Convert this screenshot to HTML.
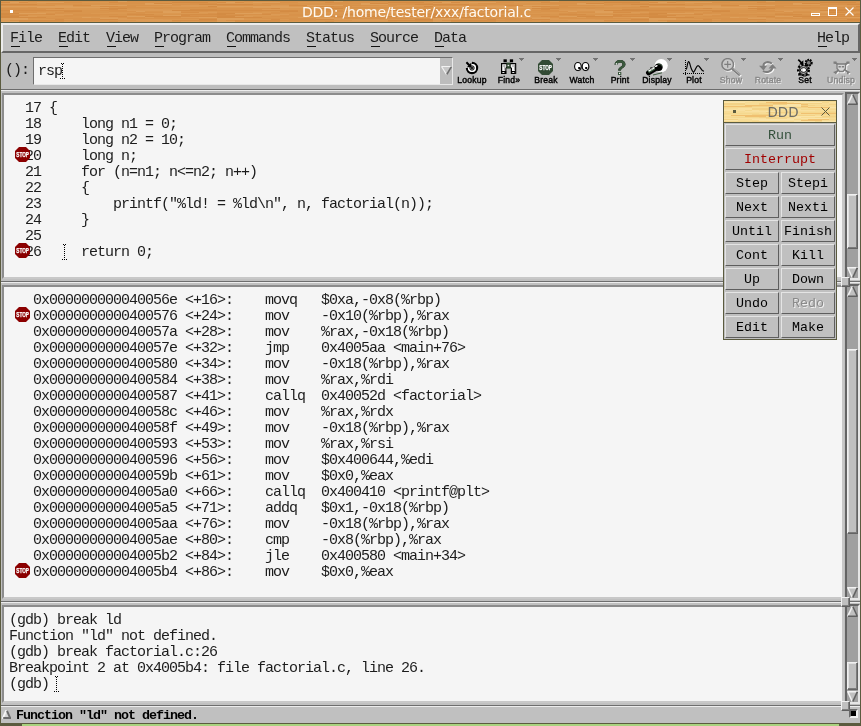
<!DOCTYPE html><html><head><meta charset="utf-8"><title>DDD: /home/tester/xxx/factorial.c</title><style>
html,body{margin:0;padding:0}
body{width:861px;height:726px;position:relative;overflow:hidden;background:#5b5b3f;font-family:"Liberation Mono",monospace;color:#000}
div,span,pre,svg{box-sizing:border-box}
.abs{position:absolute}
.mono,.menu,.lbl,.title,.btn span{will-change:transform}
.mono{font-family:"Liberation Mono",monospace;font-size:15px;letter-spacing:-1px;line-height:16px;white-space:pre;margin:0;position:absolute;color:#1c1c1c}
.menu{font-family:"Liberation Mono",monospace;font-size:15px;letter-spacing:-1px;line-height:16px;white-space:pre;position:absolute;color:#1c1c1c}
.menu i{position:absolute;left:1px;top:15px;width:9px;height:1px;background:#111}
.lbl{font-family:"Liberation Sans",sans-serif;font-size:8.6px;line-height:10px;position:absolute;text-align:center;white-space:pre;color:#000;width:60px;letter-spacing:0.2px;-webkit-text-stroke:0.4px #000}
.lbl.dis{color:#8a8a8a;text-shadow:1px 1px 0 #f4f4f4;-webkit-text-stroke:0.4px #8a8a8a}
.frame{position:absolute;border:2px solid;border-color:#8c8c8c #c8c8c8 #c8c8c8 #8c8c8c;background:#f5f5f5}
.btn{position:absolute;background:#c0c0c0;border:1px solid;border-color:#e4e4e4 #5e5e5e #5e5e5e #e4e4e4;text-align:center}
.btn span{font-family:"Liberation Mono",monospace;font-size:13.333px;line-height:20px;white-space:pre;display:block;position:relative;top:1px}
.title{position:absolute;font-family:"DejaVu Sans","Liberation Sans",sans-serif;white-space:pre}
</style></head><body>
<div style="position:absolute;left:22px;top:724px;width:817px;height:2px;background:#a9d27f;"></div>
<svg style="position:absolute;left:1px;top:1px" width="859" height="21" viewBox="0 0 859 21" shape-rendering="crispEdges"><defs><pattern id="w1" width="216" height="21" patternUnits="userSpaceOnUse"><rect width="216" height="21" fill="#d8924a"/><rect x="0" y="0" width="27" height="1" fill="#db9850"/><rect x="117" y="0" width="9" height="1" fill="#de9f5a"/><rect x="0" y="1" width="9" height="1" fill="#d58d45"/><rect x="9" y="1" width="9" height="1" fill="#de9f5a"/><rect x="18" y="1" width="9" height="1" fill="#d58d45"/><rect x="27" y="1" width="9" height="1" fill="#db9850"/><rect x="36" y="1" width="27" height="1" fill="#de9f5a"/><rect x="81" y="1" width="27" height="1" fill="#db9850"/><rect x="108" y="1" width="9" height="1" fill="#d58d45"/><rect x="153" y="1" width="18" height="1" fill="#d9954d"/><rect x="171" y="1" width="36" height="1" fill="#d38b43"/><rect x="207" y="1" width="9" height="1" fill="#d9954d"/><rect x="0" y="2" width="27" height="1" fill="#dc9a54"/><rect x="27" y="2" width="18" height="1" fill="#db9850"/><rect x="63" y="2" width="27" height="1" fill="#d9954d"/><rect x="90" y="2" width="27" height="1" fill="#d9954d"/><rect x="144" y="2" width="9" height="1" fill="#de9f5a"/><rect x="153" y="2" width="18" height="1" fill="#d38b43"/><rect x="171" y="2" width="18" height="1" fill="#d9954d"/><rect x="0" y="3" width="9" height="1" fill="#d38b43"/><rect x="9" y="3" width="27" height="1" fill="#d38b43"/><rect x="36" y="3" width="36" height="1" fill="#d9954d"/><rect x="81" y="3" width="27" height="1" fill="#d9954d"/><rect x="117" y="3" width="27" height="1" fill="#d9954d"/><rect x="144" y="3" width="27" height="1" fill="#de9f5a"/><rect x="198" y="3" width="18" height="1" fill="#d38b43"/><rect x="54" y="4" width="18" height="1" fill="#dc9a54"/><rect x="72" y="4" width="18" height="1" fill="#d58d45"/><rect x="90" y="4" width="36" height="1" fill="#de9f5a"/><rect x="162" y="4" width="18" height="1" fill="#d9954d"/><rect x="180" y="4" width="36" height="1" fill="#dc9a54"/><rect x="0" y="5" width="18" height="1" fill="#de9f5a"/><rect x="18" y="5" width="27" height="1" fill="#de9f5a"/><rect x="45" y="5" width="27" height="1" fill="#de9f5a"/><rect x="72" y="5" width="18" height="1" fill="#db9850"/><rect x="90" y="5" width="9" height="1" fill="#db9850"/><rect x="99" y="5" width="18" height="1" fill="#d58d45"/><rect x="135" y="5" width="36" height="1" fill="#db9850"/><rect x="171" y="5" width="27" height="1" fill="#dc9a54"/><rect x="198" y="5" width="9" height="1" fill="#db9850"/><rect x="207" y="5" width="9" height="1" fill="#d38b43"/><rect x="0" y="6" width="27" height="1" fill="#db9850"/><rect x="27" y="6" width="9" height="1" fill="#d9954d"/><rect x="36" y="6" width="36" height="1" fill="#de9f5a"/><rect x="72" y="6" width="36" height="1" fill="#de9f5a"/><rect x="108" y="6" width="9" height="1" fill="#d9954d"/><rect x="171" y="6" width="18" height="1" fill="#d9954d"/><rect x="54" y="7" width="9" height="1" fill="#d58d45"/><rect x="63" y="7" width="36" height="1" fill="#db9850"/><rect x="99" y="7" width="27" height="1" fill="#d38b43"/><rect x="126" y="7" width="27" height="1" fill="#d9954d"/><rect x="162" y="7" width="36" height="1" fill="#d9954d"/><rect x="198" y="7" width="18" height="1" fill="#d9954d"/><rect x="45" y="8" width="27" height="1" fill="#dc9a54"/><rect x="72" y="8" width="36" height="1" fill="#db9850"/><rect x="108" y="8" width="9" height="1" fill="#d58d45"/><rect x="117" y="8" width="27" height="1" fill="#db9850"/><rect x="144" y="8" width="9" height="1" fill="#dc9a54"/><rect x="153" y="8" width="9" height="1" fill="#dc9a54"/><rect x="162" y="8" width="27" height="1" fill="#db9850"/><rect x="189" y="8" width="27" height="1" fill="#d58d45"/><rect x="0" y="9" width="27" height="1" fill="#d58d45"/><rect x="27" y="9" width="18" height="1" fill="#d58d45"/><rect x="45" y="9" width="36" height="1" fill="#d58d45"/><rect x="81" y="9" width="18" height="1" fill="#d9954d"/><rect x="126" y="9" width="9" height="1" fill="#dc9a54"/><rect x="135" y="9" width="36" height="1" fill="#dc9a54"/><rect x="171" y="9" width="18" height="1" fill="#d38b43"/><rect x="189" y="9" width="27" height="1" fill="#d38b43"/><rect x="45" y="10" width="18" height="1" fill="#d9954d"/><rect x="63" y="10" width="18" height="1" fill="#d38b43"/><rect x="81" y="10" width="18" height="1" fill="#d9954d"/><rect x="99" y="10" width="9" height="1" fill="#d9954d"/><rect x="135" y="10" width="9" height="1" fill="#de9f5a"/><rect x="144" y="10" width="18" height="1" fill="#d9954d"/><rect x="162" y="10" width="18" height="1" fill="#de9f5a"/><rect x="207" y="10" width="9" height="1" fill="#d9954d"/><rect x="36" y="11" width="18" height="1" fill="#db9850"/><rect x="72" y="11" width="18" height="1" fill="#d9954d"/><rect x="90" y="11" width="18" height="1" fill="#d9954d"/><rect x="108" y="11" width="27" height="1" fill="#db9850"/><rect x="162" y="11" width="18" height="1" fill="#de9f5a"/><rect x="180" y="11" width="18" height="1" fill="#d58d45"/><rect x="198" y="11" width="9" height="1" fill="#dc9a54"/><rect x="207" y="11" width="9" height="1" fill="#dc9a54"/><rect x="0" y="12" width="18" height="1" fill="#d38b43"/><rect x="18" y="12" width="27" height="1" fill="#de9f5a"/><rect x="63" y="12" width="27" height="1" fill="#d9954d"/><rect x="90" y="12" width="36" height="1" fill="#db9850"/><rect x="144" y="12" width="36" height="1" fill="#db9850"/><rect x="180" y="12" width="9" height="1" fill="#db9850"/><rect x="189" y="12" width="18" height="1" fill="#db9850"/><rect x="0" y="13" width="9" height="1" fill="#d38b43"/><rect x="45" y="13" width="9" height="1" fill="#d58d45"/><rect x="54" y="13" width="18" height="1" fill="#dc9a54"/><rect x="117" y="13" width="9" height="1" fill="#d9954d"/><rect x="126" y="13" width="27" height="1" fill="#d58d45"/><rect x="153" y="13" width="27" height="1" fill="#d9954d"/><rect x="180" y="13" width="36" height="1" fill="#d58d45"/><rect x="0" y="14" width="27" height="1" fill="#d58d45"/><rect x="27" y="14" width="36" height="1" fill="#db9850"/><rect x="99" y="14" width="36" height="1" fill="#d9954d"/><rect x="162" y="14" width="18" height="1" fill="#de9f5a"/><rect x="180" y="14" width="9" height="1" fill="#d58d45"/><rect x="0" y="15" width="18" height="1" fill="#d38b43"/><rect x="18" y="15" width="18" height="1" fill="#dc9a54"/><rect x="36" y="15" width="18" height="1" fill="#d9954d"/><rect x="72" y="15" width="36" height="1" fill="#d9954d"/><rect x="108" y="15" width="18" height="1" fill="#d58d45"/><rect x="126" y="15" width="18" height="1" fill="#de9f5a"/><rect x="144" y="15" width="36" height="1" fill="#d38b43"/><rect x="180" y="15" width="36" height="1" fill="#d58d45"/><rect x="0" y="16" width="27" height="1" fill="#d38b43"/><rect x="27" y="16" width="9" height="1" fill="#d38b43"/><rect x="36" y="16" width="9" height="1" fill="#d38b43"/><rect x="45" y="16" width="36" height="1" fill="#d9954d"/><rect x="81" y="16" width="9" height="1" fill="#de9f5a"/><rect x="90" y="16" width="27" height="1" fill="#dc9a54"/><rect x="144" y="16" width="9" height="1" fill="#dc9a54"/><rect x="180" y="16" width="18" height="1" fill="#dc9a54"/><rect x="198" y="16" width="18" height="1" fill="#de9f5a"/><rect x="0" y="17" width="27" height="1" fill="#de9f5a"/><rect x="27" y="17" width="18" height="1" fill="#d9954d"/><rect x="99" y="17" width="18" height="1" fill="#de9f5a"/><rect x="117" y="17" width="9" height="1" fill="#dc9a54"/><rect x="0" y="18" width="27" height="1" fill="#de9f5a"/><rect x="27" y="18" width="27" height="1" fill="#db9850"/><rect x="54" y="18" width="9" height="1" fill="#d58d45"/><rect x="63" y="18" width="9" height="1" fill="#db9850"/><rect x="99" y="18" width="18" height="1" fill="#d58d45"/><rect x="117" y="18" width="27" height="1" fill="#dc9a54"/><rect x="144" y="18" width="18" height="1" fill="#dc9a54"/><rect x="162" y="18" width="36" height="1" fill="#db9850"/><rect x="198" y="18" width="18" height="1" fill="#d38b43"/><rect x="0" y="19" width="9" height="1" fill="#dc9a54"/><rect x="18" y="19" width="9" height="1" fill="#d58d45"/><rect x="27" y="19" width="36" height="1" fill="#d58d45"/><rect x="99" y="19" width="36" height="1" fill="#d9954d"/><rect x="135" y="19" width="36" height="1" fill="#dc9a54"/><rect x="171" y="19" width="18" height="1" fill="#d58d45"/><rect x="189" y="19" width="27" height="1" fill="#d58d45"/><rect x="0" y="20" width="18" height="1" fill="#de9f5a"/><rect x="63" y="20" width="9" height="1" fill="#dc9a54"/><rect x="72" y="20" width="36" height="1" fill="#db9850"/><rect x="117" y="20" width="36" height="1" fill="#dc9a54"/><rect x="153" y="20" width="18" height="1" fill="#dc9a54"/><rect x="171" y="20" width="9" height="1" fill="#d9954d"/><rect x="180" y="20" width="18" height="1" fill="#db9850"/><rect x="198" y="20" width="18" height="1" fill="#d9954d"/></pattern></defs><rect width="859" height="21" fill="url(#w1)"/></svg>
<div class="title" style="left:1px;top:4px;width:831px;text-align:center;font-size:14px;line-height:17px;color:#fffaf2;letter-spacing:-0.2px">DDD: /home/tester/xxx/factorial.c</div>
<div style="position:absolute;left:10px;top:10px;width:3px;height:3px;background:#ffffff;"></div>
<div class="abs" style="left:811px;top:13px;width:9px;height:3px;border:1px solid #fff"></div>
<div class="abs" style="left:828px;top:7px;width:9px;height:9px;border:1px solid #fff;border-top-width:2px"></div>
<svg class="abs" style="left:845px;top:7px" width="9" height="9" viewBox="0 0 9 9"><path d="M0.5 0.5L8.5 8.5M8.5 0.5L0.5 8.5" stroke="#fff" stroke-width="1.1" fill="none"/></svg>
<div style="position:absolute;left:1px;top:23px;width:859px;height:700px;background:#c0c0c0;"></div>
<div class="abs" style="left:1px;top:23px;width:859px;height:30px;border:2px solid;border-color:#ececec #666666 #666666 #ececec;background:#c0c0c0"></div>
<div class="menu" style="left:10px;top:31px">File<i></i></div>
<div class="menu" style="left:58px;top:31px">Edit<i></i></div>
<div class="menu" style="left:106px;top:31px">View<i></i></div>
<div class="menu" style="left:154px;top:31px">Program<i></i></div>
<div class="menu" style="left:226px;top:31px">Commands<i></i></div>
<div class="menu" style="left:306px;top:31px">Status<i></i></div>
<div class="menu" style="left:370px;top:31px">Source<i></i></div>
<div class="menu" style="left:434px;top:31px">Data<i></i></div>
<div class="menu" style="left:817px;top:31px">Help<i></i></div>
<div style="position:absolute;left:1px;top:53px;width:859px;height:36px;background:#bdbdbd;"></div>
<div class="menu" style="left:5px;top:63px">():</div>
<div class="abs" style="left:33px;top:57px;width:420px;height:28px;border:1px solid;border-color:#6e6e6e #e8e8e8 #e8e8e8 #6e6e6e;background:#f5f5f5"></div>
<div style="position:absolute;left:440px;top:58px;width:12px;height:26px;background:#bdbdbd;"></div>
<svg class="abs" style="left:441px;top:66px" width="11" height="9" viewBox="0 0 11 9"><path d="M0.5 0.5L10.5 0.5L5.5 8.5Z" fill="#c8c8c8"/><path d="M0.5 0.5L10 0.5M0.5 0.5L5.5 8.5" stroke="#f2f2f2" stroke-width="1.2" fill="none"/><path d="M10.3 0.8L5.8 8.3" stroke="#6e6e6e" stroke-width="1.6" fill="none"/></svg>
<div class="menu" style="left:38px;top:64px">rsp</div>
<svg class="abs" style="left:60px;top:63px" width="5" height="16" viewBox="0 0 5 16" shape-rendering="crispEdges"><path d="M1 0h1v1h-1zM3 0h1v1h-1zM2 1h1v1h-1zM2 3h1v1h-1zM2 5h1v1h-1zM2 7h1v1h-1zM2 9h1v1h-1zM2 11h1v1h-1zM2 13h1v1h-1zM0 15h1v1h-1zM2 15h1v1h-1zM4 15h1v1h-1z" fill="#000"/></svg>
<div style="position:absolute;left:1px;top:89px;width:859px;height:1px;background:#6c6c6c;"></div>
<div style="position:absolute;left:1px;top:90px;width:859px;height:1px;background:#ececec;"></div>
<svg class="abs" style="left:465px;top:61px" width="15" height="15" viewBox="0 0 15 15"><circle cx="7" cy="7" r="5.100" fill="none" stroke="#000" stroke-width="2.200"/><path d="M7 7H-1V-1H7Z" fill="#c0c0c0"/><circle cx="7" cy="7" r="4.100" fill="#fff"/><circle cx="7" cy="7" r="2.800" fill="#c4c4c4"/><circle cx="7" cy="7" r="2.100" fill="none" stroke="#000" stroke-width="0.900"/><circle cx="7" cy="7" r="1.100" fill="#000"/><path d="M1.400 1.300L4.800 4.700" stroke="#000" stroke-width="2.100"/><path d="M6.400 1.600V6.200H1.800Z" fill="#000"/></svg>
<div class="lbl" style="left:441.5px;top:75.4px">Lookup</div>
<svg class="abs" style="left:500px;top:59px" width="18" height="16" viewBox="0 0 18 16"><rect x="3.500" y="0.300" width="3.300" height="3" fill="#000"/><rect x="9.800" y="0.300" width="3.300" height="3" fill="#000"/><path d="M1.600 4.600H7V8L5.800 9.500V14.400H1.600Z" fill="#f6f6f6" stroke="#000" stroke-width="1.200"/><path d="M10 4.600H15.600V14.400H11.400V9.500L10 8Z" fill="#f6f6f6" stroke="#000" stroke-width="1.200"/><rect x="6.600" y="3.600" width="3.800" height="6" fill="#2c452c"/><rect x="7.600" y="5.800" width="1.600" height="1.400" fill="#e8e8e8"/><rect x="1.200" y="12" width="5" height="2.900" fill="#000"/><rect x="11" y="12" width="5" height="2.900" fill="#000"/><rect x="2.400" y="13" width="2" height="0.900" fill="#fff"/><rect x="12.300" y="13" width="2" height="0.900" fill="#fff"/><path d="M3 7h2M12 7h2" stroke="#9a9a9a" stroke-width="1"/><path d="M4.800 5.500V11.500M14.500 5.500V11.500" stroke="#a8a8a8" stroke-width="1"/><path d="M16.300 5.500V14.800" stroke="#8a8a8a" stroke-width="0.800"/></svg>
<div class="lbl" style="left:478.5px;top:75.4px">Find»</div>
<svg class="abs" style="left:519px;top:58px" width="5" height="3" viewBox="0 0 5 3" shape-rendering="crispEdges"><path d="M0 0H5V1H0ZM1 1H4V2H1ZM2 2H3V3H2Z" fill="#727272"/></svg>
<svg class="abs" style="left:538px;top:60px" width="15" height="15" viewBox="0 0 15 15"><polygon points="4,0 11,0 15,4 15,11 11,15 4,15 0,11 0,4" fill="#324a34"/><text x="1.3" y="10.2" font-family="Liberation Sans, sans-serif" font-weight="bold" font-size="7" fill="#fff" stroke="#fff" stroke-width="0.25" textLength="12.6" lengthAdjust="spacingAndGlyphs">STOP</text></svg>
<div class="lbl" style="left:515.5px;top:75.4px">Break</div>
<svg class="abs" style="left:556px;top:58px" width="5" height="3" viewBox="0 0 5 3" shape-rendering="crispEdges"><path d="M0 0H5V1H0ZM1 1H4V2H1ZM2 2H3V3H2Z" fill="#727272"/></svg>
<svg class="abs" style="left:574px;top:61px" width="17" height="12" viewBox="0 0 17 12"><ellipse cx="4.400" cy="6.300" rx="3.400" ry="4" fill="#8a8a8a"/><ellipse cx="12" cy="6.300" rx="3.400" ry="4" fill="#8a8a8a"/><ellipse cx="3.900" cy="5.500" rx="3.300" ry="4" fill="#fff" stroke="#000" stroke-width="1.100"/><ellipse cx="11.500" cy="5.500" rx="3.300" ry="4" fill="#fff" stroke="#000" stroke-width="1.100"/><rect x="4.200" y="6" width="2" height="2" fill="#000"/><rect x="11.200" y="6" width="2" height="2" fill="#000"/></svg>
<div class="lbl" style="left:552px;top:75.4px">Watch</div>
<svg class="abs" style="left:593px;top:58px" width="5" height="3" viewBox="0 0 5 3" shape-rendering="crispEdges"><path d="M0 0H5V1H0ZM1 1H4V2H1ZM2 2H3V3H2Z" fill="#727272"/></svg>
<svg class="abs" style="left:611px;top:57px" width="18" height="21" viewBox="0 0 18 21"><text x="9" y="18.300" font-family="Liberation Sans, sans-serif" font-weight="bold" font-size="21.500" fill="#3a583c" text-anchor="middle" style="filter:drop-shadow(0.700px 0.500px 0 #000)">?</text><rect x="4.800" y="6.200" width="1.400" height="1.400" fill="#fff"/><rect x="8" y="15.800" width="1.200" height="1.200" fill="#fff"/></svg>
<div class="lbl" style="left:589.5px;top:75.4px">Print</div>
<svg class="abs" style="left:630px;top:58px" width="5" height="3" viewBox="0 0 5 3" shape-rendering="crispEdges"><path d="M0 0H5V1H0ZM1 1H4V2H1ZM2 2H3V3H2Z" fill="#727272"/></svg>
<svg class="abs" style="left:645px;top:58px" width="24" height="19" viewBox="0 0 24 19"><circle cx="16.200" cy="7.600" r="6.600" fill="#fdfdfd"/><path d="M8 17L17 14.800" stroke="#3a583c" stroke-width="1"/><path d="M3.500 14.800L11 10.300" stroke="#000" stroke-width="5" stroke-linecap="round"/><path d="M3.300 14L11 9.400" stroke="#3a583c" stroke-width="2.800"/><path d="M3.600 13.100L11 8.700" stroke="#fff" stroke-width="1.500"/><ellipse cx="13.600" cy="9.300" rx="4" ry="3.700" fill="#000"/><path d="M12.800 6L15.500 6.300L17 8.500" stroke="#3a583c" stroke-width="1" fill="none"/><ellipse cx="11.300" cy="8" rx="1.500" ry="0.800" fill="#fff" transform="rotate(-30 11.300 8)"/><circle cx="6.200" cy="10.300" r="1.100" fill="#000"/><circle cx="6.200" cy="10.500" r="0.500" fill="#fff"/></svg>
<div class="lbl" style="left:626.5px;top:75.4px">Display</div>
<svg class="abs" style="left:667px;top:58px" width="5" height="3" viewBox="0 0 5 3" shape-rendering="crispEdges"><path d="M0 0H5V1H0ZM1 1H4V2H1ZM2 2H3V3H2Z" fill="#727272"/></svg>
<svg class="abs" style="left:682px;top:60px" width="23" height="15" viewBox="0 0 23 15"><path d="M3.500 0V11" stroke="#000" stroke-width="1" stroke-dasharray="1 1"/><path d="M3.500 12V15" stroke="#000" stroke-width="1"/><path d="M1 13.500H23" stroke="#000" stroke-width="1" stroke-dasharray="1 1"/><path d="M4.300 9.500C5.500 6 5.500 1.600 6.600 1.600C8.200 1.600 8 9 11.500 12.300C13.500 11 14 5.600 16 5.600C18.200 5.600 18.500 10.500 22 11.300" stroke="#000" stroke-width="1.150" fill="none"/></svg>
<div class="lbl" style="left:663.5px;top:75.4px">Plot</div>
<svg class="abs" style="left:704px;top:58px" width="5" height="3" viewBox="0 0 5 3" shape-rendering="crispEdges"><path d="M0 0H5V1H0ZM1 1H4V2H1ZM2 2H3V3H2Z" fill="#727272"/></svg>
<svg class="abs" style="left:720px;top:58px" width="23" height="20" viewBox="0 0 23 20"><g transform="translate(0.900,0.900)" stroke="#f6f6f6" fill="none"><circle cx="7.700" cy="6.400" r="5.800" stroke-width="1.500"/><path d="M12.500 11L20 17.300" stroke-width="2.600"/></g><circle cx="7.700" cy="6.400" r="5.800" stroke="#7e7e7e" stroke-width="1.500" fill="#c8c8c8"/><path d="M12.300 10.800L20 17.300" stroke="#7e7e7e" stroke-width="2.600"/><path d="M13.500 11L20 16.500" stroke="#c0c0c0" stroke-width="0.800"/><path d="M7.700 3V9.800M4.300 6.400H11" stroke="#7e7e7e" stroke-width="1.100"/></svg>
<div class="lbl dis" style="left:700.5px;top:75.4px">Show</div>
<svg class="abs" style="left:741px;top:58px" width="5" height="3" viewBox="0 0 5 3" shape-rendering="crispEdges"><path d="M0 0H5V1H0ZM1 1H4V2H1ZM2 2H3V3H2Z" fill="#727272"/></svg>
<svg class="abs" style="left:758px;top:59px" width="20" height="17" viewBox="0 0 20 17"><g transform="translate(1,1)" stroke="#f6f6f6" fill="none" stroke-width="2"><path d="M5.500 7.500C5 3 10 2 14 4.500"/><path d="M14.500 7C15 12 9 14.500 5 12"/></g><g stroke="#7e7e7e" fill="none" stroke-width="2"><path d="M5.500 7.500C5 3 10 2 14 4.500"/><path d="M14.500 7C15 12 9 14.500 5 12"/></g><path d="M1 6.800H9L5.500 11.500Z" fill="#7e7e7e"/><path d="M10.500 9.500H18.500L14.500 5Z" fill="#7e7e7e"/></svg>
<div class="lbl dis" style="left:737.5px;top:75.4px">Rotate</div>
<svg class="abs" style="left:778px;top:58px" width="5" height="3" viewBox="0 0 5 3" shape-rendering="crispEdges"><path d="M0 0H5V1H0ZM1 1H4V2H1ZM2 2H3V3H2Z" fill="#727272"/></svg>
<svg class="abs" style="left:795px;top:58px" width="20" height="19" viewBox="0 0 20 19"><circle cx="13.700" cy="4.800" r="3" fill="#7e7e7e" stroke="#000" stroke-width="2" stroke-dasharray="1.600 0.900"/><circle cx="13.700" cy="4.800" r="2.300" fill="#7e7e7e" stroke="#000" stroke-width="0.800"/><path d="M2.500 11H14.500V17H2.500Z" fill="#d4d4d4"/><circle cx="8.500" cy="12" r="5.300" fill="none" stroke="#000" stroke-width="2.400" stroke-dasharray="2.100 1.600"/><circle cx="8.500" cy="12" r="4.300" fill="#d0d0d0" stroke="#000" stroke-width="0.900"/><ellipse cx="8.500" cy="12" rx="3.300" ry="2.400" fill="#d8d8d8" stroke="#000" stroke-width="0.900"/><circle cx="9" cy="12" r="1.400" fill="#fff"/><rect x="0" y="17.600" width="20" height="2" fill="#c0c0c0"/><path d="M3 16.800H6.500L8.500 18H10.500L12.500 16.800H14.500" stroke="#000" stroke-width="1.200" fill="none"/><path d="M3.300 1.600L6.800 5.100" stroke="#000" stroke-width="1.700"/><path d="M8.300 2.200V6.500H4Z" fill="#000"/></svg>
<div class="lbl" style="left:774.5px;top:75.4px">Set</div>
<svg class="abs" style="left:832px;top:60px" width="21" height="17" viewBox="0 0 21 17"><g transform="translate(1,1)" stroke="#f6f6f6" fill="none"><path d="M3 2.500L17 13M16 2.500L3 13" stroke-width="1.800"/><path d="M5 4H13.500V8.500L11 11.500H7.500L5 8.500Z" stroke-width="1.400"/></g><path d="M3 2.500L17 13M16 2.500L3 13" stroke="#7e7e7e" stroke-width="1.800"/><path d="M1.500 1.500h3v2.300h-3zM14.500 1.500h3v2.300h-3zM1 12l3.500 -1v3.500zM18.500 12l-3.500 -1v3.500z" fill="#7e7e7e"/><path d="M5 4H13.500V8.500L11 11.500H7.500L5 8.500Z" fill="#d6d6d6" stroke="#7e7e7e" stroke-width="1.300"/><rect x="6.500" y="6" width="2.300" height="1.500" fill="#7e7e7e"/><rect x="9.800" y="6" width="2.300" height="1.500" fill="#7e7e7e"/></svg>
<div class="lbl dis" style="left:811px;top:75.4px">Undisp</div>
<svg class="abs" style="left:852px;top:58px" width="5" height="3" viewBox="0 0 5 3" shape-rendering="crispEdges"><path d="M0 0H5V1H0ZM1 1H4V2H1ZM2 2H3V3H2Z" fill="#727272"/></svg>
<div class="frame" style="left:2px;top:93px;width:842px;height:186px"></div>
<div class="frame" style="left:2px;top:285px;width:842px;height:314px"></div>
<div class="frame" style="left:2px;top:605px;width:842px;height:98px"></div>
<div style="position:absolute;left:1px;top:281px;width:859px;height:1px;background:#6e6e6e;"></div>
<div style="position:absolute;left:1px;top:282px;width:859px;height:1px;background:#ececec;"></div>
<div style="position:absolute;left:1px;top:601px;width:859px;height:1px;background:#6e6e6e;"></div>
<div style="position:absolute;left:1px;top:602px;width:859px;height:1px;background:#ececec;"></div>
<div style="position:absolute;left:1px;top:705px;width:859px;height:1px;background:#6e6e6e;"></div>
<div style="position:absolute;left:1px;top:706px;width:859px;height:1px;background:#ececec;"></div>
<div class="abs" style="left:845px;top:92px;width:15px;height:188px;border:2px solid;border-color:#646464 #e6e6e6 #e6e6e6 #646464;background:#a0a0a0"></div><svg class="abs" style="left:847px;top:94px" width="11" height="11" viewBox="0 0 11 11"><path d="M5.500 0L11 11H0Z" fill="#c0c0c0"/><path d="M5.300 0.500L0.600 10.500" stroke="#f2f2f2" stroke-width="1.600"/><path d="M5.900 0.800L10.300 10.300M0.800 10.300H10.800" stroke="#606060" stroke-width="1.500" fill="none"/></svg><svg class="abs" style="left:847px;top:267px" width="11" height="11" viewBox="0 0 11 11"><path d="M0 0H11L5.500 11Z" fill="#c0c0c0"/><path d="M0.300 0.700H10.500M0.700 0.500L5.200 10.500" stroke="#f2f2f2" stroke-width="1.500" fill="none"/><path d="M10.300 0.800L5.800 10.500" stroke="#606060" stroke-width="1.600"/></svg><div class="abs" style="left:847px;top:194px;width:11px;height:55px;background:#c0c0c0;border:1px solid;border-color:#f0f0f0 #646464 #646464 #f0f0f0;box-shadow:inset -1px -1px 0 #7c7c7c, inset 1px 1px 0 #e0e0e0"></div>
<div class="abs" style="left:845px;top:284px;width:15px;height:316px;border:2px solid;border-color:#646464 #e6e6e6 #e6e6e6 #646464;background:#a0a0a0"></div><svg class="abs" style="left:847px;top:286px" width="11" height="11" viewBox="0 0 11 11"><path d="M5.500 0L11 11H0Z" fill="#c0c0c0"/><path d="M5.300 0.500L0.600 10.500" stroke="#f2f2f2" stroke-width="1.600"/><path d="M5.900 0.800L10.300 10.300M0.800 10.300H10.800" stroke="#606060" stroke-width="1.500" fill="none"/></svg><svg class="abs" style="left:847px;top:587px" width="11" height="11" viewBox="0 0 11 11"><path d="M0 0H11L5.500 11Z" fill="#c0c0c0"/><path d="M0.300 0.700H10.500M0.700 0.500L5.200 10.500" stroke="#f2f2f2" stroke-width="1.500" fill="none"/><path d="M10.300 0.800L5.800 10.500" stroke="#606060" stroke-width="1.600"/></svg><div class="abs" style="left:847px;top:349px;width:11px;height:185px;background:#c0c0c0;border:1px solid;border-color:#f0f0f0 #646464 #646464 #f0f0f0;box-shadow:inset -1px -1px 0 #7c7c7c, inset 1px 1px 0 #e0e0e0"></div>
<div class="abs" style="left:845px;top:604px;width:15px;height:100px;border:2px solid;border-color:#646464 #e6e6e6 #e6e6e6 #646464;background:#a0a0a0"></div><svg class="abs" style="left:847px;top:606px" width="11" height="11" viewBox="0 0 11 11"><path d="M5.500 0L11 11H0Z" fill="#c0c0c0"/><path d="M5.300 0.500L0.600 10.500" stroke="#f2f2f2" stroke-width="1.600"/><path d="M5.900 0.800L10.300 10.300M0.800 10.300H10.800" stroke="#606060" stroke-width="1.500" fill="none"/></svg><svg class="abs" style="left:847px;top:691px" width="11" height="11" viewBox="0 0 11 11"><path d="M0 0H11L5.500 11Z" fill="#c0c0c0"/><path d="M0.300 0.700H10.500M0.700 0.500L5.200 10.500" stroke="#f2f2f2" stroke-width="1.500" fill="none"/><path d="M10.300 0.800L5.800 10.500" stroke="#606060" stroke-width="1.600"/></svg><div class="abs" style="left:847px;top:662px;width:11px;height:28px;background:#c0c0c0;border:1px solid;border-color:#f0f0f0 #646464 #646464 #f0f0f0;box-shadow:inset -1px -1px 0 #7c7c7c, inset 1px 1px 0 #e0e0e0"></div>
<div class="abs" style="left:841px;top:277px;width:9px;height:10px;background:#c0c0c0;border:1px solid;border-color:#f0f0f0 #606060 #606060 #f0f0f0;box-shadow:inset -1px -1px 0 #808080"></div>
<div class="abs" style="left:841px;top:597px;width:9px;height:10px;background:#c0c0c0;border:1px solid;border-color:#f0f0f0 #606060 #606060 #f0f0f0;box-shadow:inset -1px -1px 0 #808080"></div>
<div class="abs" style="left:841px;top:701px;width:9px;height:10px;background:#c0c0c0;border:1px solid;border-color:#f0f0f0 #606060 #606060 #f0f0f0;box-shadow:inset -1px -1px 0 #808080"></div>
<pre class="mono" style="left:9px;top:101px">  17 {
  18     long n1 = 0;
  19     long n2 = 10;
  20     long n;
  21     for (n=n1; n&lt;=n2; n++)
  22     {
  23         printf("%ld! = %ld\n", n, factorial(n));
  24     }
  25 
  26     return 0;</pre>
<svg class="abs" style="left:15px;top:147px" width="15" height="15" viewBox="0 0 15 15"><polygon points="4,0 11,0 15,4 15,11 11,15 4,15 0,11 0,4" fill="#8b0000"/><text x="1.3" y="10.2" font-family="Liberation Sans, sans-serif" font-weight="bold" font-size="7" fill="#fff" stroke="#fff" stroke-width="0.25" textLength="12.6" lengthAdjust="spacingAndGlyphs">STOP</text></svg>
<svg class="abs" style="left:15px;top:243px" width="15" height="15" viewBox="0 0 15 15"><polygon points="4,0 11,0 15,4 15,11 11,15 4,15 0,11 0,4" fill="#8b0000"/><text x="1.3" y="10.2" font-family="Liberation Sans, sans-serif" font-weight="bold" font-size="7" fill="#fff" stroke="#fff" stroke-width="0.25" textLength="12.6" lengthAdjust="spacingAndGlyphs">STOP</text></svg>
<svg class="abs" style="left:62px;top:244px" width="5" height="16" viewBox="0 0 5 16" shape-rendering="crispEdges"><path d="M1 0h1v1h-1zM3 0h1v1h-1zM2 1h1v1h-1zM2 3h1v1h-1zM2 5h1v1h-1zM2 7h1v1h-1zM2 9h1v1h-1zM2 11h1v1h-1zM2 13h1v1h-1zM0 15h1v1h-1zM2 15h1v1h-1zM4 15h1v1h-1z" fill="#000"/></svg>
<pre class="mono" style="left:9px;top:293px">   0x000000000040056e &lt;+16&gt;:    movq   $0xa,-0x8(%rbp)
   0x0000000000400576 &lt;+24&gt;:    mov    -0x10(%rbp),%rax
   0x000000000040057a &lt;+28&gt;:    mov    %rax,-0x18(%rbp)
   0x000000000040057e &lt;+32&gt;:    jmp    0x4005aa &lt;main+76&gt;
   0x0000000000400580 &lt;+34&gt;:    mov    -0x18(%rbp),%rax
   0x0000000000400584 &lt;+38&gt;:    mov    %rax,%rdi
   0x0000000000400587 &lt;+41&gt;:    callq  0x40052d &lt;factorial&gt;
   0x000000000040058c &lt;+46&gt;:    mov    %rax,%rdx
   0x000000000040058f &lt;+49&gt;:    mov    -0x18(%rbp),%rax
   0x0000000000400593 &lt;+53&gt;:    mov    %rax,%rsi
   0x0000000000400596 &lt;+56&gt;:    mov    $0x400644,%edi
   0x000000000040059b &lt;+61&gt;:    mov    $0x0,%eax
   0x00000000004005a0 &lt;+66&gt;:    callq  0x400410 &lt;printf@plt&gt;
   0x00000000004005a5 &lt;+71&gt;:    addq   $0x1,-0x18(%rbp)
   0x00000000004005aa &lt;+76&gt;:    mov    -0x18(%rbp),%rax
   0x00000000004005ae &lt;+80&gt;:    cmp    -0x8(%rbp),%rax
   0x00000000004005b2 &lt;+84&gt;:    jle    0x400580 &lt;main+34&gt;
   0x00000000004005b4 &lt;+86&gt;:    mov    $0x0,%eax</pre>
<svg class="abs" style="left:15px;top:307px" width="15" height="15" viewBox="0 0 15 15"><polygon points="4,0 11,0 15,4 15,11 11,15 4,15 0,11 0,4" fill="#8b0000"/><text x="1.3" y="10.2" font-family="Liberation Sans, sans-serif" font-weight="bold" font-size="7" fill="#fff" stroke="#fff" stroke-width="0.25" textLength="12.6" lengthAdjust="spacingAndGlyphs">STOP</text></svg>
<svg class="abs" style="left:15px;top:563px" width="15" height="15" viewBox="0 0 15 15"><polygon points="4,0 11,0 15,4 15,11 11,15 4,15 0,11 0,4" fill="#8b0000"/><text x="1.3" y="10.2" font-family="Liberation Sans, sans-serif" font-weight="bold" font-size="7" fill="#fff" stroke="#fff" stroke-width="0.25" textLength="12.6" lengthAdjust="spacingAndGlyphs">STOP</text></svg>
<pre class="mono" style="left:9px;top:613px">(gdb) break ld
Function "ld" not defined.
(gdb) break factorial.c:26
Breakpoint 2 at 0x4005b4: file factorial.c, line 26.
(gdb) </pre>
<svg class="abs" style="left:54px;top:676px" width="5" height="16" viewBox="0 0 5 16" shape-rendering="crispEdges"><path d="M1 0h1v1h-1zM3 0h1v1h-1zM2 1h1v1h-1zM2 3h1v1h-1zM2 5h1v1h-1zM2 7h1v1h-1zM2 9h1v1h-1zM2 11h1v1h-1zM2 13h1v1h-1zM0 15h1v1h-1zM2 15h1v1h-1zM4 15h1v1h-1z" fill="#000"/></svg>
<svg class="abs" style="left:2px;top:710px" width="9" height="9" viewBox="0 0 9 9"><path d="M4.500 0L9 9H0Z" fill="#d6d6d6"/><path d="M4.200 0.300L0.600 8.700" stroke="#f6f6f6" stroke-width="1.800"/><path d="M5 0.800L8.300 8.300" stroke="#6c6c6c" stroke-width="1.900"/><path d="M1.200 8H9" stroke="#6c6c6c" stroke-width="2"/></svg>
<div class="mono" style="left:16px;top:708px;font-weight:bold;font-size:13.333px;letter-spacing:-1px;line-height:16px;color:#000">Function "ld" not defined.</div>
<div class="abs" style="left:849px;top:709px;width:9px;height:9px;background:#000;border:2px solid;border-color:#6a6a6a #f0f0f0 #f0f0f0 #6a6a6a"></div>
<div style="position:absolute;left:723px;top:100px;width:114px;height:240px;background:#5b5b3f;"></div>
<svg style="position:absolute;left:724px;top:101px" width="112" height="21" viewBox="0 0 112 21" shape-rendering="crispEdges"><defs><pattern id="w2" width="112" height="21" patternUnits="userSpaceOnUse"><rect width="112" height="21" fill="#f7dc96"/><rect x="0" y="0" width="7" height="1" fill="#f9e0a0"/><rect x="7" y="0" width="21" height="1" fill="#f9e0a0"/><rect x="49" y="0" width="7" height="1" fill="#f9e0a0"/><rect x="56" y="0" width="14" height="1" fill="#f9e0a0"/><rect x="84" y="0" width="21" height="1" fill="#f5d88e"/><rect x="105" y="0" width="7" height="1" fill="#f5d88e"/><rect x="0" y="1" width="21" height="1" fill="#fae4a8"/><rect x="42" y="1" width="21" height="1" fill="#f0c070"/><rect x="70" y="1" width="28" height="1" fill="#fae4a8"/><rect x="98" y="1" width="7" height="1" fill="#f5d88e"/><rect x="105" y="1" width="7" height="1" fill="#f9e0a0"/><rect x="0" y="2" width="21" height="1" fill="#f3d286"/><rect x="35" y="2" width="14" height="1" fill="#f3d286"/><rect x="49" y="2" width="28" height="1" fill="#f0c070"/><rect x="77" y="2" width="21" height="1" fill="#f3d286"/><rect x="0" y="3" width="21" height="1" fill="#f3d286"/><rect x="35" y="3" width="28" height="1" fill="#f3d286"/><rect x="63" y="3" width="14" height="1" fill="#fae4a8"/><rect x="77" y="3" width="7" height="1" fill="#f0c070"/><rect x="105" y="3" width="7" height="1" fill="#f3d286"/><rect x="21" y="4" width="28" height="1" fill="#f0c070"/><rect x="49" y="4" width="28" height="1" fill="#fae4a8"/><rect x="77" y="4" width="7" height="1" fill="#f3d286"/><rect x="84" y="4" width="7" height="1" fill="#f3d286"/><rect x="91" y="4" width="14" height="1" fill="#f5d88e"/><rect x="0" y="5" width="28" height="1" fill="#f0c070"/><rect x="28" y="5" width="7" height="1" fill="#f3d286"/><rect x="35" y="5" width="7" height="1" fill="#f3d286"/><rect x="42" y="5" width="7" height="1" fill="#f3d286"/><rect x="49" y="5" width="28" height="1" fill="#f9e0a0"/><rect x="77" y="5" width="7" height="1" fill="#f0c070"/><rect x="0" y="6" width="28" height="1" fill="#f5d88e"/><rect x="56" y="6" width="28" height="1" fill="#f3d286"/><rect x="84" y="6" width="21" height="1" fill="#f0c070"/><rect x="105" y="6" width="7" height="1" fill="#fae4a8"/><rect x="14" y="7" width="14" height="1" fill="#f9e0a0"/><rect x="28" y="7" width="21" height="1" fill="#f3d286"/><rect x="49" y="7" width="21" height="1" fill="#fae4a8"/><rect x="0" y="8" width="28" height="1" fill="#f9e0a0"/><rect x="28" y="8" width="7" height="1" fill="#f3d286"/><rect x="35" y="8" width="14" height="1" fill="#f3d286"/><rect x="49" y="8" width="28" height="1" fill="#f9e0a0"/><rect x="77" y="8" width="21" height="1" fill="#f5d88e"/><rect x="98" y="8" width="14" height="1" fill="#f5d88e"/><rect x="0" y="9" width="7" height="1" fill="#fae4a8"/><rect x="7" y="9" width="14" height="1" fill="#f9e0a0"/><rect x="21" y="9" width="7" height="1" fill="#f5d88e"/><rect x="28" y="9" width="7" height="1" fill="#f9e0a0"/><rect x="63" y="9" width="28" height="1" fill="#f9e0a0"/><rect x="21" y="10" width="21" height="1" fill="#f9e0a0"/><rect x="42" y="10" width="14" height="1" fill="#fae4a8"/><rect x="98" y="10" width="14" height="1" fill="#f5d88e"/><rect x="42" y="11" width="28" height="1" fill="#f3d286"/><rect x="70" y="11" width="28" height="1" fill="#f5d88e"/><rect x="98" y="11" width="14" height="1" fill="#f3d286"/><rect x="0" y="12" width="14" height="1" fill="#f5d88e"/><rect x="14" y="12" width="21" height="1" fill="#f5d88e"/><rect x="77" y="12" width="21" height="1" fill="#f0c070"/><rect x="98" y="12" width="14" height="1" fill="#f0c070"/><rect x="28" y="13" width="14" height="1" fill="#f3d286"/><rect x="42" y="13" width="7" height="1" fill="#f3d286"/><rect x="49" y="13" width="21" height="1" fill="#f9e0a0"/><rect x="91" y="13" width="21" height="1" fill="#f5d88e"/><rect x="0" y="14" width="7" height="1" fill="#f9e0a0"/><rect x="7" y="14" width="28" height="1" fill="#f0c070"/><rect x="35" y="14" width="21" height="1" fill="#f0c070"/><rect x="56" y="14" width="7" height="1" fill="#f9e0a0"/><rect x="70" y="14" width="21" height="1" fill="#f3d286"/><rect x="105" y="14" width="7" height="1" fill="#f5d88e"/><rect x="21" y="15" width="21" height="1" fill="#f0c070"/><rect x="70" y="15" width="28" height="1" fill="#fae4a8"/><rect x="98" y="15" width="14" height="1" fill="#f3d286"/><rect x="7" y="16" width="28" height="1" fill="#f5d88e"/><rect x="35" y="16" width="14" height="1" fill="#f3d286"/><rect x="49" y="16" width="21" height="1" fill="#f5d88e"/><rect x="70" y="16" width="7" height="1" fill="#fae4a8"/><rect x="91" y="16" width="21" height="1" fill="#f5d88e"/><rect x="0" y="17" width="21" height="1" fill="#f9e0a0"/><rect x="21" y="17" width="21" height="1" fill="#f9e0a0"/><rect x="42" y="17" width="21" height="1" fill="#f5d88e"/><rect x="63" y="17" width="14" height="1" fill="#f9e0a0"/><rect x="77" y="17" width="28" height="1" fill="#fae4a8"/><rect x="0" y="18" width="14" height="1" fill="#f3d286"/><rect x="28" y="18" width="14" height="1" fill="#fae4a8"/><rect x="42" y="18" width="28" height="1" fill="#fae4a8"/><rect x="70" y="18" width="14" height="1" fill="#f5d88e"/><rect x="84" y="18" width="21" height="1" fill="#f0c070"/><rect x="105" y="18" width="7" height="1" fill="#f5d88e"/><rect x="0" y="19" width="14" height="1" fill="#fae4a8"/><rect x="35" y="19" width="21" height="1" fill="#fae4a8"/><rect x="56" y="19" width="7" height="1" fill="#f9e0a0"/><rect x="63" y="19" width="14" height="1" fill="#f9e0a0"/><rect x="77" y="19" width="21" height="1" fill="#f0c070"/><rect x="0" y="20" width="28" height="1" fill="#f5d88e"/><rect x="28" y="20" width="28" height="1" fill="#f3d286"/><rect x="56" y="20" width="14" height="1" fill="#f5d88e"/><rect x="70" y="20" width="21" height="1" fill="#f9e0a0"/><rect x="91" y="20" width="7" height="1" fill="#f5d88e"/><rect x="98" y="20" width="14" height="1" fill="#fae4a8"/></pattern></defs><rect width="112" height="21" fill="url(#w2)"/></svg>
<div style="position:absolute;left:724px;top:123px;width:112px;height:216px;background:#c0c0c0;"></div>
<div style="position:absolute;left:733px;top:110px;width:3px;height:3px;background:#5b5b3f;"></div>
<div class="title" style="left:727px;top:103px;width:112px;text-align:center;font-size:13.5px;line-height:18px;color:#6c6c66">DDD</div>
<svg class="abs" style="left:821px;top:107px" width="9" height="9" viewBox="0 0 9 9"><path d="M0.500 0.500L8.500 8.500M8.500 0.500L0.500 8.500" stroke="#5b5b3f" stroke-width="1" fill="none"/></svg>
<div class="btn" style="left:725px;top:124px;width:110px;height:22px;color:#34503c"><span>Run</span></div>
<div class="btn" style="left:725px;top:148px;width:110px;height:22px;color:#a00000"><span>Interrupt</span></div>
<div class="btn" style="left:725px;top:172px;width:54px;height:22px;color:#000"><span>Step</span></div>
<div class="btn" style="left:781px;top:172px;width:54px;height:22px;color:#000"><span>Stepi</span></div>
<div class="btn" style="left:725px;top:196px;width:54px;height:22px;color:#000"><span>Next</span></div>
<div class="btn" style="left:781px;top:196px;width:54px;height:22px;color:#000"><span>Nexti</span></div>
<div class="btn" style="left:725px;top:220px;width:54px;height:22px;color:#000"><span>Until</span></div>
<div class="btn" style="left:781px;top:220px;width:54px;height:22px;color:#000"><span>Finish</span></div>
<div class="btn" style="left:725px;top:244px;width:54px;height:22px;color:#000"><span>Cont</span></div>
<div class="btn" style="left:781px;top:244px;width:54px;height:22px;color:#000"><span>Kill</span></div>
<div class="btn" style="left:725px;top:268px;width:54px;height:22px;color:#000"><span>Up</span></div>
<div class="btn" style="left:781px;top:268px;width:54px;height:22px;color:#000"><span>Down</span></div>
<div class="btn" style="left:725px;top:292px;width:54px;height:22px;color:#000"><span>Undo</span></div>
<div class="btn" style="left:781px;top:292px;width:54px;height:22px;color:#8a8a8a"><span style="text-shadow:1px 1px 0 #f0f0f0">Redo</span></div>
<div class="btn" style="left:725px;top:316px;width:54px;height:22px;color:#000"><span>Edit</span></div>
<div class="btn" style="left:781px;top:316px;width:54px;height:22px;color:#000"><span>Make</span></div>
</body></html>
